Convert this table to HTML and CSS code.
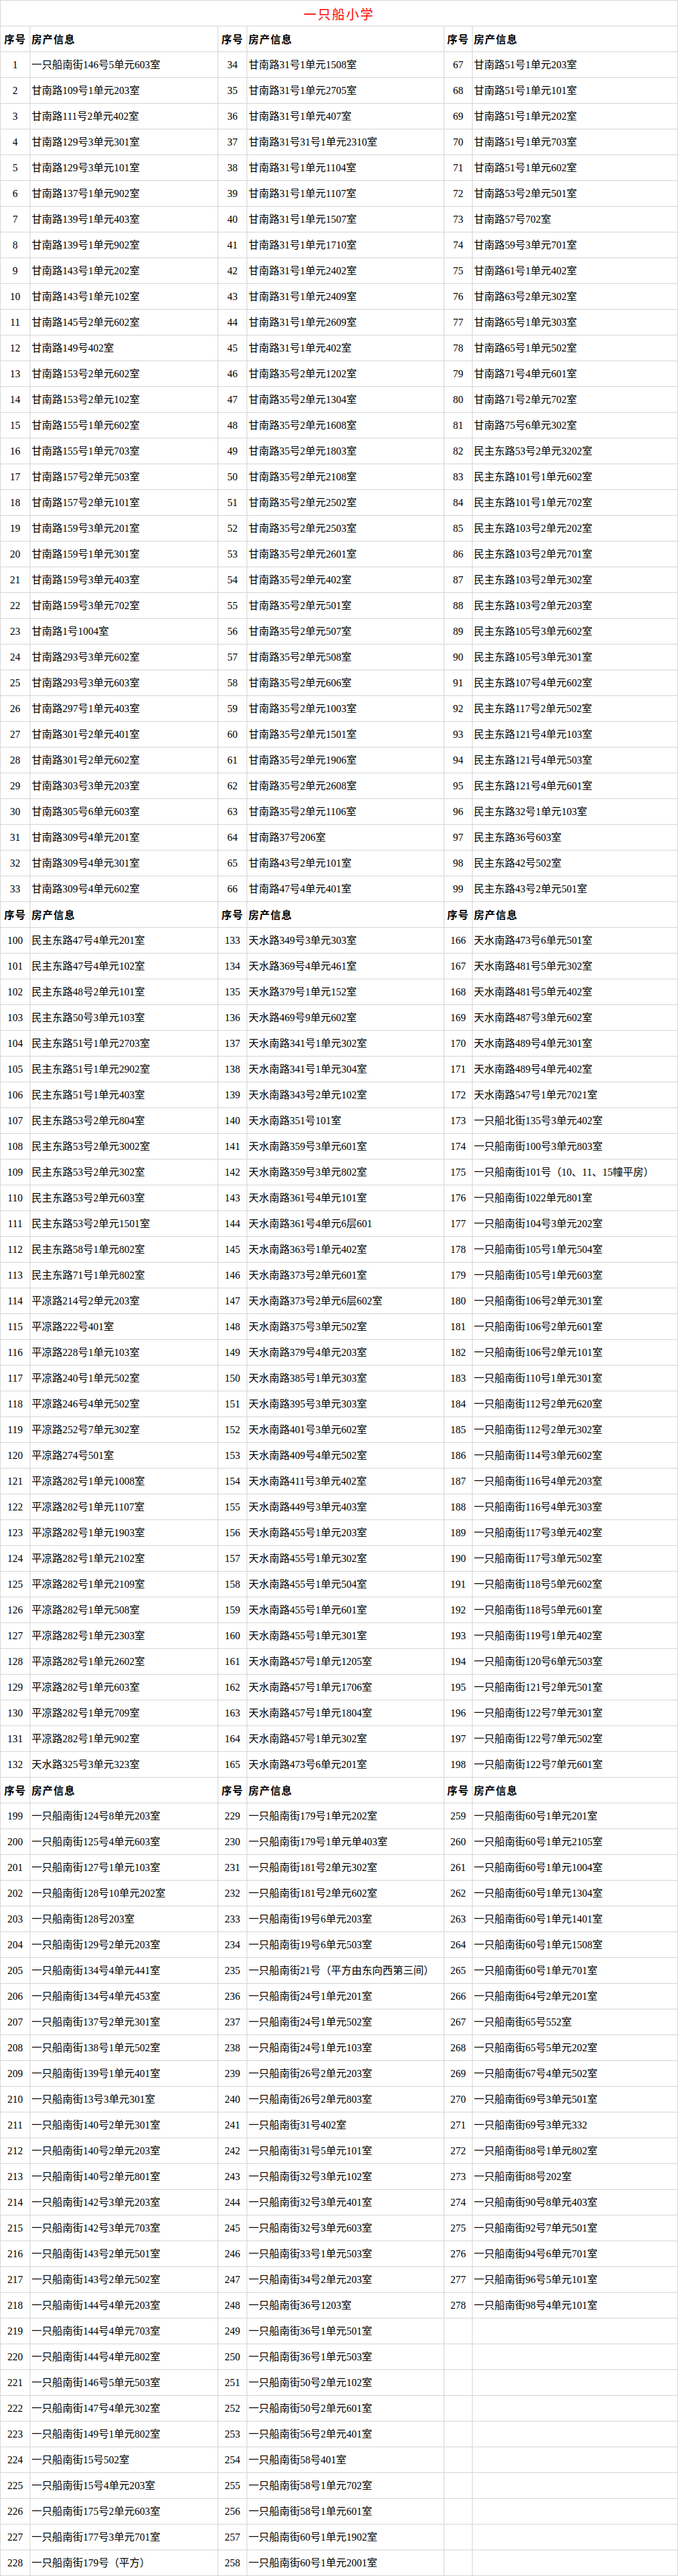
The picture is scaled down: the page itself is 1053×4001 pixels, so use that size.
FILE: index.html
```html
<!DOCTYPE html>
<html lang="zh-CN">
<head>
<meta charset="utf-8">
<title>一只船小学</title>
<link rel="stylesheet" href="styles.css">
</head>
<body>
<div class="sheet">
<div class="title">一只船小学</div>
<div class="h">序号</div><div class="hh">房产信息</div><div class="h">序号</div><div class="hh">房产信息</div><div class="h">序号</div><div class="hh">房产信息</div>
<div class="n">1</div><div class="t">一只船南街146号5单元603室</div><div class="n">34</div><div class="t">甘南路31号1单元1508室</div><div class="n">67</div><div class="t">甘南路51号1单元203室</div>
<div class="n">2</div><div class="t">甘南路109号1单元203室</div><div class="n">35</div><div class="t">甘南路31号1单元2705室</div><div class="n">68</div><div class="t">甘南路51号1单元101室</div>
<div class="n">3</div><div class="t">甘南路111号2单元402室</div><div class="n">36</div><div class="t">甘南路31号1单元407室</div><div class="n">69</div><div class="t">甘南路51号1单元202室</div>
<div class="n">4</div><div class="t">甘南路129号3单元301室</div><div class="n">37</div><div class="t">甘南路31号31号1单元2310室</div><div class="n">70</div><div class="t">甘南路51号1单元703室</div>
<div class="n">5</div><div class="t">甘南路129号3单元101室</div><div class="n">38</div><div class="t">甘南路31号1单元1104室</div><div class="n">71</div><div class="t">甘南路51号1单元602室</div>
<div class="n">6</div><div class="t">甘南路137号1单元902室</div><div class="n">39</div><div class="t">甘南路31号1单元1107室</div><div class="n">72</div><div class="t">甘南路53号2单元501室</div>
<div class="n">7</div><div class="t">甘南路139号1单元403室</div><div class="n">40</div><div class="t">甘南路31号1单元1507室</div><div class="n">73</div><div class="t">甘南路57号702室</div>
<div class="n">8</div><div class="t">甘南路139号1单元902室</div><div class="n">41</div><div class="t">甘南路31号1单元1710室</div><div class="n">74</div><div class="t">甘南路59号3单元701室</div>
<div class="n">9</div><div class="t">甘南路143号1单元202室</div><div class="n">42</div><div class="t">甘南路31号1单元2402室</div><div class="n">75</div><div class="t">甘南路61号1单元402室</div>
<div class="n">10</div><div class="t">甘南路143号1单元102室</div><div class="n">43</div><div class="t">甘南路31号1单元2409室</div><div class="n">76</div><div class="t">甘南路63号2单元302室</div>
<div class="n">11</div><div class="t">甘南路145号2单元602室</div><div class="n">44</div><div class="t">甘南路31号1单元2609室</div><div class="n">77</div><div class="t">甘南路65号1单元303室</div>
<div class="n">12</div><div class="t">甘南路149号402室</div><div class="n">45</div><div class="t">甘南路31号1单元402室</div><div class="n">78</div><div class="t">甘南路65号1单元502室</div>
<div class="n">13</div><div class="t">甘南路153号2单元602室</div><div class="n">46</div><div class="t">甘南路35号2单元1202室</div><div class="n">79</div><div class="t">甘南路71号4单元601室</div>
<div class="n">14</div><div class="t">甘南路153号2单元102室</div><div class="n">47</div><div class="t">甘南路35号2单元1304室</div><div class="n">80</div><div class="t">甘南路71号2单元702室</div>
<div class="n">15</div><div class="t">甘南路155号1单元602室</div><div class="n">48</div><div class="t">甘南路35号2单元1608室</div><div class="n">81</div><div class="t">甘南路75号6单元302室</div>
<div class="n">16</div><div class="t">甘南路155号1单元703室</div><div class="n">49</div><div class="t">甘南路35号2单元1803室</div><div class="n">82</div><div class="t">民主东路53号2单元3202室</div>
<div class="n">17</div><div class="t">甘南路157号2单元503室</div><div class="n">50</div><div class="t">甘南路35号2单元2108室</div><div class="n">83</div><div class="t">民主东路101号1单元602室</div>
<div class="n">18</div><div class="t">甘南路157号2单元101室</div><div class="n">51</div><div class="t">甘南路35号2单元2502室</div><div class="n">84</div><div class="t">民主东路101号1单元702室</div>
<div class="n">19</div><div class="t">甘南路159号3单元201室</div><div class="n">52</div><div class="t">甘南路35号2单元2503室</div><div class="n">85</div><div class="t">民主东路103号2单元202室</div>
<div class="n">20</div><div class="t">甘南路159号1单元301室</div><div class="n">53</div><div class="t">甘南路35号2单元2601室</div><div class="n">86</div><div class="t">民主东路103号2单元701室</div>
<div class="n">21</div><div class="t">甘南路159号3单元403室</div><div class="n">54</div><div class="t">甘南路35号2单元402室</div><div class="n">87</div><div class="t">民主东路103号2单元302室</div>
<div class="n">22</div><div class="t">甘南路159号3单元702室</div><div class="n">55</div><div class="t">甘南路35号2单元501室</div><div class="n">88</div><div class="t">民主东路103号2单元203室</div>
<div class="n">23</div><div class="t">甘南路1号1004室</div><div class="n">56</div><div class="t">甘南路35号2单元507室</div><div class="n">89</div><div class="t">民主东路105号3单元602室</div>
<div class="n">24</div><div class="t">甘南路293号3单元602室</div><div class="n">57</div><div class="t">甘南路35号2单元508室</div><div class="n">90</div><div class="t">民主东路105号3单元301室</div>
<div class="n">25</div><div class="t">甘南路293号3单元603室</div><div class="n">58</div><div class="t">甘南路35号2单元606室</div><div class="n">91</div><div class="t">民主东路107号4单元602室</div>
<div class="n">26</div><div class="t">甘南路297号1单元403室</div><div class="n">59</div><div class="t">甘南路35号2单元1003室</div><div class="n">92</div><div class="t">民主东路117号2单元502室</div>
<div class="n">27</div><div class="t">甘南路301号2单元401室</div><div class="n">60</div><div class="t">甘南路35号2单元1501室</div><div class="n">93</div><div class="t">民主东路121号4单元103室</div>
<div class="n">28</div><div class="t">甘南路301号2单元602室</div><div class="n">61</div><div class="t">甘南路35号2单元1906室</div><div class="n">94</div><div class="t">民主东路121号4单元503室</div>
<div class="n">29</div><div class="t">甘南路303号3单元203室</div><div class="n">62</div><div class="t">甘南路35号2单元2608室</div><div class="n">95</div><div class="t">民主东路121号4单元601室</div>
<div class="n">30</div><div class="t">甘南路305号6单元603室</div><div class="n">63</div><div class="t">甘南路35号2单元1106室</div><div class="n">96</div><div class="t">民主东路32号1单元103室</div>
<div class="n">31</div><div class="t">甘南路309号4单元201室</div><div class="n">64</div><div class="t">甘南路37号206室</div><div class="n">97</div><div class="t">民主东路36号603室</div>
<div class="n">32</div><div class="t">甘南路309号4单元301室</div><div class="n">65</div><div class="t">甘南路43号2单元101室</div><div class="n">98</div><div class="t">民主东路42号502室</div>
<div class="n">33</div><div class="t">甘南路309号4单元602室</div><div class="n">66</div><div class="t">甘南路47号4单元401室</div><div class="n">99</div><div class="t">民主东路43号2单元501室</div>
<div class="h">序号</div><div class="hh">房产信息</div><div class="h">序号</div><div class="hh">房产信息</div><div class="h">序号</div><div class="hh">房产信息</div>
<div class="n">100</div><div class="t">民主东路47号4单元201室</div><div class="n">133</div><div class="t">天水路349号3单元303室</div><div class="n">166</div><div class="t">天水南路473号6单元501室</div>
<div class="n">101</div><div class="t">民主东路47号4单元102室</div><div class="n">134</div><div class="t">天水路369号4单元461室</div><div class="n">167</div><div class="t">天水南路481号5单元302室</div>
<div class="n">102</div><div class="t">民主东路48号2单元101室</div><div class="n">135</div><div class="t">天水路379号1单元152室</div><div class="n">168</div><div class="t">天水南路481号5单元402室</div>
<div class="n">103</div><div class="t">民主东路50号3单元103室</div><div class="n">136</div><div class="t">天水路469号9单元602室</div><div class="n">169</div><div class="t">天水南路487号3单元602室</div>
<div class="n">104</div><div class="t">民主东路51号1单元2703室</div><div class="n">137</div><div class="t">天水南路341号1单元302室</div><div class="n">170</div><div class="t">天水南路489号4单元301室</div>
<div class="n">105</div><div class="t">民主东路51号1单元2902室</div><div class="n">138</div><div class="t">天水南路341号1单元304室</div><div class="n">171</div><div class="t">天水南路489号4单元402室</div>
<div class="n">106</div><div class="t">民主东路51号1单元403室</div><div class="n">139</div><div class="t">天水南路343号2单元102室</div><div class="n">172</div><div class="t">天水南路547号1单元7021室</div>
<div class="n">107</div><div class="t">民主东路53号2单元804室</div><div class="n">140</div><div class="t">天水南路351号101室</div><div class="n">173</div><div class="t">一只船北街135号3单元402室</div>
<div class="n">108</div><div class="t">民主东路53号2单元3002室</div><div class="n">141</div><div class="t">天水南路359号3单元601室</div><div class="n">174</div><div class="t">一只船南街100号3单元803室</div>
<div class="n">109</div><div class="t">民主东路53号2单元302室</div><div class="n">142</div><div class="t">天水南路359号3单元802室</div><div class="n">175</div><div class="t">一只船南街101号（10、11、15幢平房）</div>
<div class="n">110</div><div class="t">民主东路53号2单元603室</div><div class="n">143</div><div class="t">天水南路361号4单元101室</div><div class="n">176</div><div class="t">一只船南街1022单元801室</div>
<div class="n">111</div><div class="t">民主东路53号2单元1501室</div><div class="n">144</div><div class="t">天水南路361号4单元6层601</div><div class="n">177</div><div class="t">一只船南街104号3单元202室</div>
<div class="n">112</div><div class="t">民主东路58号1单元802室</div><div class="n">145</div><div class="t">天水南路363号1单元402室</div><div class="n">178</div><div class="t">一只船南街105号1单元504室</div>
<div class="n">113</div><div class="t">民主东路71号1单元802室</div><div class="n">146</div><div class="t">天水南路373号2单元601室</div><div class="n">179</div><div class="t">一只船南街105号1单元603室</div>
<div class="n">114</div><div class="t">平凉路214号2单元203室</div><div class="n">147</div><div class="t">天水南路373号2单元6层602室</div><div class="n">180</div><div class="t">一只船南街106号2单元301室</div>
<div class="n">115</div><div class="t">平凉路222号401室</div><div class="n">148</div><div class="t">天水南路375号3单元502室</div><div class="n">181</div><div class="t">一只船南街106号2单元601室</div>
<div class="n">116</div><div class="t">平凉路228号1单元103室</div><div class="n">149</div><div class="t">天水南路379号4单元203室</div><div class="n">182</div><div class="t">一只船南街106号2单元101室</div>
<div class="n">117</div><div class="t">平凉路240号1单元502室</div><div class="n">150</div><div class="t">天水南路385号1单元303室</div><div class="n">183</div><div class="t">一只船南街110号1单元301室</div>
<div class="n">118</div><div class="t">平凉路246号4单元502室</div><div class="n">151</div><div class="t">天水南路395号3单元303室</div><div class="n">184</div><div class="t">一只船南街112号2单元620室</div>
<div class="n">119</div><div class="t">平凉路252号7单元302室</div><div class="n">152</div><div class="t">天水南路401号3单元602室</div><div class="n">185</div><div class="t">一只船南街112号2单元302室</div>
<div class="n">120</div><div class="t">平凉路274号501室</div><div class="n">153</div><div class="t">天水南路409号4单元502室</div><div class="n">186</div><div class="t">一只船南街114号3单元602室</div>
<div class="n">121</div><div class="t">平凉路282号1单元1008室</div><div class="n">154</div><div class="t">天水南路411号3单元402室</div><div class="n">187</div><div class="t">一只船南街116号4单元203室</div>
<div class="n">122</div><div class="t">平凉路282号1单元1107室</div><div class="n">155</div><div class="t">天水南路449号3单元403室</div><div class="n">188</div><div class="t">一只船南街116号4单元303室</div>
<div class="n">123</div><div class="t">平凉路282号1单元1903室</div><div class="n">156</div><div class="t">天水南路455号1单元203室</div><div class="n">189</div><div class="t">一只船南街117号3单元402室</div>
<div class="n">124</div><div class="t">平凉路282号1单元2102室</div><div class="n">157</div><div class="t">天水南路455号1单元302室</div><div class="n">190</div><div class="t">一只船南街117号3单元502室</div>
<div class="n">125</div><div class="t">平凉路282号1单元2109室</div><div class="n">158</div><div class="t">天水南路455号1单元504室</div><div class="n">191</div><div class="t">一只船南街118号5单元602室</div>
<div class="n">126</div><div class="t">平凉路282号1单元508室</div><div class="n">159</div><div class="t">天水南路455号1单元601室</div><div class="n">192</div><div class="t">一只船南街118号5单元601室</div>
<div class="n">127</div><div class="t">平凉路282号1单元2303室</div><div class="n">160</div><div class="t">天水南路455号1单元301室</div><div class="n">193</div><div class="t">一只船南街119号1单元402室</div>
<div class="n">128</div><div class="t">平凉路282号1单元2602室</div><div class="n">161</div><div class="t">天水南路457号1单元1205室</div><div class="n">194</div><div class="t">一只船南街120号6单元503室</div>
<div class="n">129</div><div class="t">平凉路282号1单元603室</div><div class="n">162</div><div class="t">天水南路457号1单元1706室</div><div class="n">195</div><div class="t">一只船南街121号2单元501室</div>
<div class="n">130</div><div class="t">平凉路282号1单元709室</div><div class="n">163</div><div class="t">天水南路457号1单元1804室</div><div class="n">196</div><div class="t">一只船南街122号7单元301室</div>
<div class="n">131</div><div class="t">平凉路282号1单元902室</div><div class="n">164</div><div class="t">天水南路457号1单元302室</div><div class="n">197</div><div class="t">一只船南街122号7单元502室</div>
<div class="n">132</div><div class="t">天水路325号3单元323室</div><div class="n">165</div><div class="t">天水南路473号6单元201室</div><div class="n">198</div><div class="t">一只船南街122号7单元601室</div>
<div class="h">序号</div><div class="hh">房产信息</div><div class="h">序号</div><div class="hh">房产信息</div><div class="h">序号</div><div class="hh">房产信息</div>
<div class="n">199</div><div class="t">一只船南街124号8单元203室</div><div class="n">229</div><div class="t">一只船南街179号1单元202室</div><div class="n">259</div><div class="t">一只船南街60号1单元201室</div>
<div class="n">200</div><div class="t">一只船南街125号4单元603室</div><div class="n">230</div><div class="t">一只船南街179号1单元单403室</div><div class="n">260</div><div class="t">一只船南街60号1单元2105室</div>
<div class="n">201</div><div class="t">一只船南街127号1单元103室</div><div class="n">231</div><div class="t">一只船南街181号2单元302室</div><div class="n">261</div><div class="t">一只船南街60号1单元1004室</div>
<div class="n">202</div><div class="t">一只船南街128号10单元202室</div><div class="n">232</div><div class="t">一只船南街181号2单元602室</div><div class="n">262</div><div class="t">一只船南街60号1单元1304室</div>
<div class="n">203</div><div class="t">一只船南街128号203室</div><div class="n">233</div><div class="t">一只船南街19号6单元203室</div><div class="n">263</div><div class="t">一只船南街60号1单元1401室</div>
<div class="n">204</div><div class="t">一只船南街129号2单元203室</div><div class="n">234</div><div class="t">一只船南街19号6单元503室</div><div class="n">264</div><div class="t">一只船南街60号1单元1508室</div>
<div class="n">205</div><div class="t">一只船南街134号4单元441室</div><div class="n">235</div><div class="t">一只船南街21号（平方由东向西第三间）</div><div class="n">265</div><div class="t">一只船南街60号1单元701室</div>
<div class="n">206</div><div class="t">一只船南街134号4单元453室</div><div class="n">236</div><div class="t">一只船南街24号1单元201室</div><div class="n">266</div><div class="t">一只船南街64号2单元201室</div>
<div class="n">207</div><div class="t">一只船南街137号2单元301室</div><div class="n">237</div><div class="t">一只船南街24号1单元502室</div><div class="n">267</div><div class="t">一只船南街65号552室</div>
<div class="n">208</div><div class="t">一只船南街138号1单元502室</div><div class="n">238</div><div class="t">一只船南街24号1单元103室</div><div class="n">268</div><div class="t">一只船南街65号5单元202室</div>
<div class="n">209</div><div class="t">一只船南街139号1单元401室</div><div class="n">239</div><div class="t">一只船南街26号2单元203室</div><div class="n">269</div><div class="t">一只船南街67号4单元502室</div>
<div class="n">210</div><div class="t">一只船南街13号3单元301室</div><div class="n">240</div><div class="t">一只船南街26号2单元803室</div><div class="n">270</div><div class="t">一只船南街69号3单元501室</div>
<div class="n">211</div><div class="t">一只船南街140号2单元301室</div><div class="n">241</div><div class="t">一只船南街31号402室</div><div class="n">271</div><div class="t">一只船南街69号3单元332</div>
<div class="n">212</div><div class="t">一只船南街140号2单元203室</div><div class="n">242</div><div class="t">一只船南街31号5单元101室</div><div class="n">272</div><div class="t">一只船南街88号1单元802室</div>
<div class="n">213</div><div class="t">一只船南街140号2单元801室</div><div class="n">243</div><div class="t">一只船南街32号3单元102室</div><div class="n">273</div><div class="t">一只船南街88号202室</div>
<div class="n">214</div><div class="t">一只船南街142号3单元203室</div><div class="n">244</div><div class="t">一只船南街32号3单元401室</div><div class="n">274</div><div class="t">一只船南街90号8单元403室</div>
<div class="n">215</div><div class="t">一只船南街142号3单元703室</div><div class="n">245</div><div class="t">一只船南街32号3单元603室</div><div class="n">275</div><div class="t">一只船南街92号7单元501室</div>
<div class="n">216</div><div class="t">一只船南街143号2单元501室</div><div class="n">246</div><div class="t">一只船南街33号1单元503室</div><div class="n">276</div><div class="t">一只船南街94号6单元701室</div>
<div class="n">217</div><div class="t">一只船南街143号2单元502室</div><div class="n">247</div><div class="t">一只船南街34号2单元203室</div><div class="n">277</div><div class="t">一只船南街96号5单元101室</div>
<div class="n">218</div><div class="t">一只船南街144号4单元203室</div><div class="n">248</div><div class="t">一只船南街36号1203室</div><div class="n">278</div><div class="t">一只船南街98号4单元101室</div>
<div class="n">219</div><div class="t">一只船南街144号4单元703室</div><div class="n">249</div><div class="t">一只船南街36号1单元501室</div><div class="n"></div><div class="t"></div>
<div class="n">220</div><div class="t">一只船南街144号4单元802室</div><div class="n">250</div><div class="t">一只船南街36号1单元503室</div><div class="n"></div><div class="t"></div>
<div class="n">221</div><div class="t">一只船南街146号5单元503室</div><div class="n">251</div><div class="t">一只船南街50号2单元102室</div><div class="n"></div><div class="t"></div>
<div class="n">222</div><div class="t">一只船南街147号4单元302室</div><div class="n">252</div><div class="t">一只船南街50号2单元601室</div><div class="n"></div><div class="t"></div>
<div class="n">223</div><div class="t">一只船南街149号1单元802室</div><div class="n">253</div><div class="t">一只船南街56号2单元401室</div><div class="n"></div><div class="t"></div>
<div class="n">224</div><div class="t">一只船南街15号502室</div><div class="n">254</div><div class="t">一只船南街58号401室</div><div class="n"></div><div class="t"></div>
<div class="n">225</div><div class="t">一只船南街15号4单元203室</div><div class="n">255</div><div class="t">一只船南街58号1单元702室</div><div class="n"></div><div class="t"></div>
<div class="n">226</div><div class="t">一只船南街175号2单元603室</div><div class="n">256</div><div class="t">一只船南街58号1单元601室</div><div class="n"></div><div class="t"></div>
<div class="n">227</div><div class="t">一只船南街177号3单元701室</div><div class="n">257</div><div class="t">一只船南街60号1单元1902室</div><div class="n"></div><div class="t"></div>
<div class="n">228</div><div class="t">一只船南街179号（平方）</div><div class="n">258</div><div class="t">一只船南街60号1单元2001室</div><div class="n"></div><div class="t"></div>
</div>
</body>
</html>
```
FILE: styles.css
```css
html, body {
  margin: 0;
  padding: 0;
  background: #ffffff;
}

body {
  font-family: "Liberation Serif", "Noto Sans CJK SC", serif;
  color: #000000;
}

.sheet {
  display: grid;
  grid-template-columns: 45px 291px 44px 305px 43px 318px;
  grid-auto-rows: 39px;
  gap: 1px;
  padding: 1px;
  width: 1053px;
  box-sizing: border-box;
  background: #d4d4d4;
}

.sheet > div {
  background: #ffffff;
  font-size: 16px;
  line-height: 39px;
  white-space: nowrap;
  overflow: hidden;
}

.title {
  grid-column: 1 / -1;
  text-align: center;
  color: #ff0000;
  font-family: "Noto Sans CJK SC", sans-serif;
  letter-spacing: 2px;
  padding-top: 2px;
  box-sizing: border-box;
}

.sheet > .title {
  font-size: 20px;
  line-height: 37px;
}

.n {
  text-align: center;
}

.t {
  padding-left: 2px;
}

.h,
.hh {
  font-family: "Noto Sans CJK SC", sans-serif;
  font-weight: bold;
  letter-spacing: 1px;
}

.h {
  text-align: center;
}

.hh {
  padding-left: 2px;
}
```
